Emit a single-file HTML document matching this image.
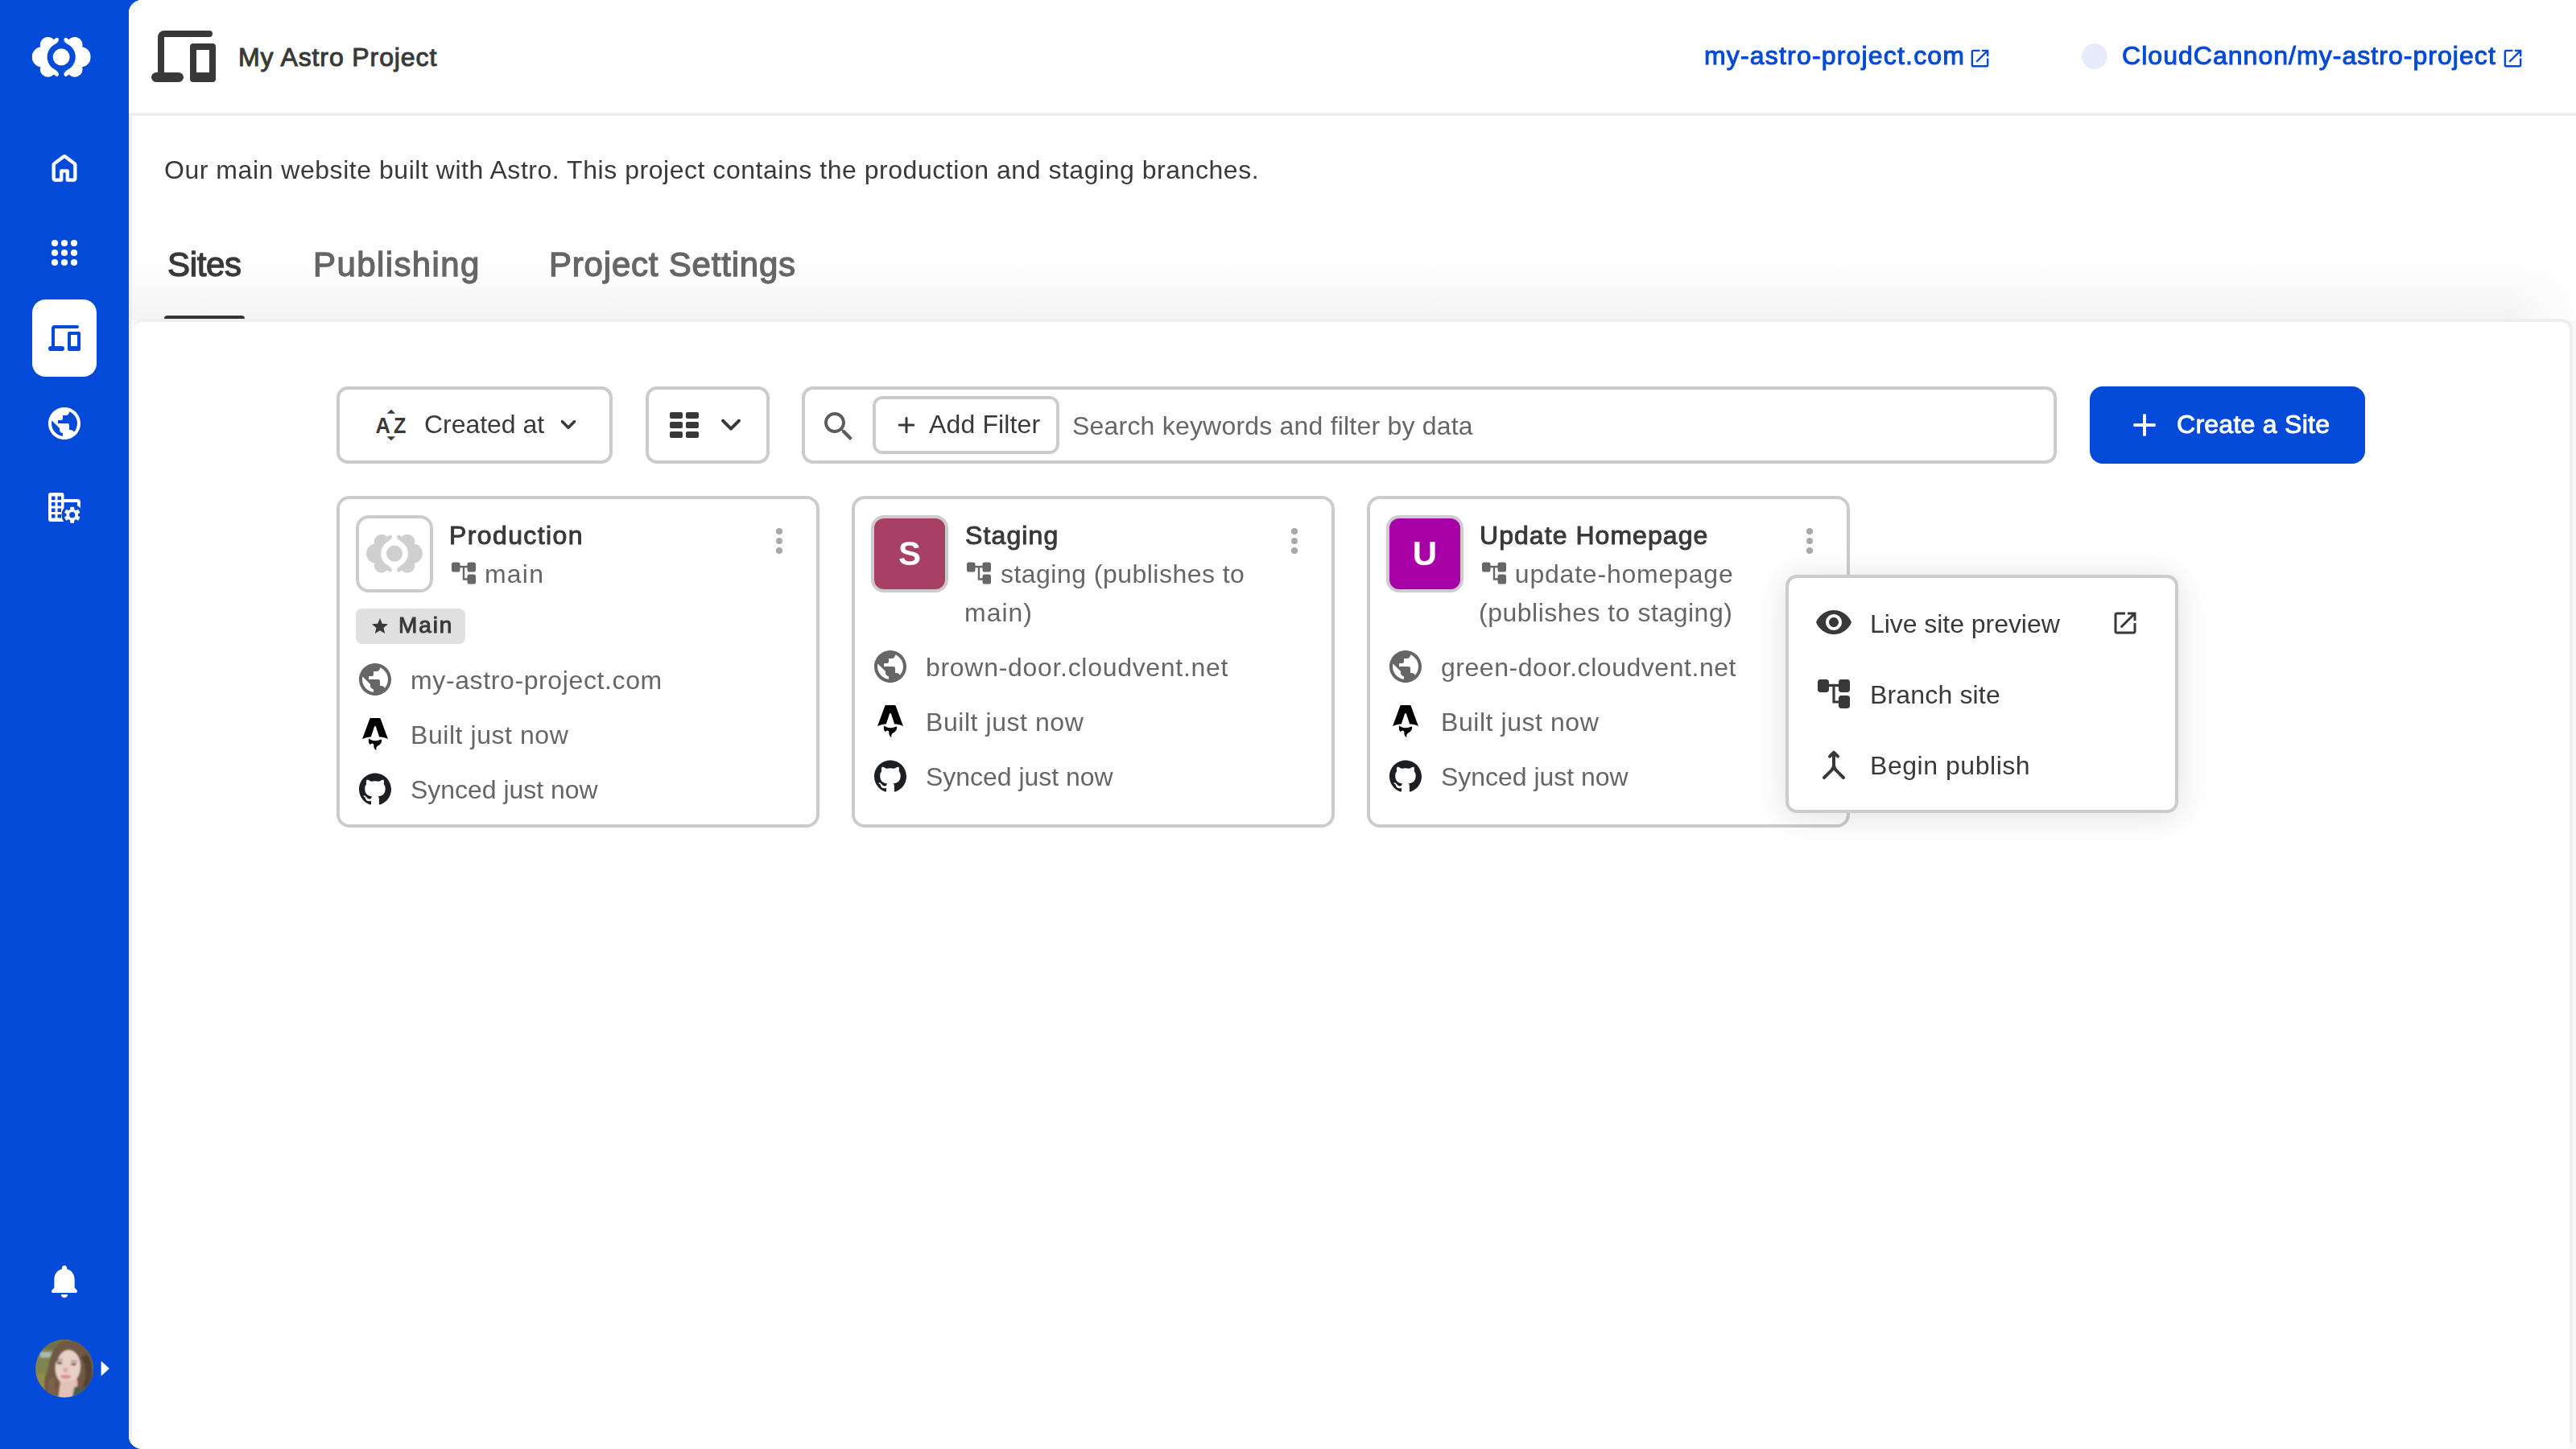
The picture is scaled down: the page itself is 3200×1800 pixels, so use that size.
<!DOCTYPE html>
<html lang="en">
<head>
<meta charset="utf-8">
<title>My Astro Project - Sites</title>
<style>
*{box-sizing:border-box;margin:0;padding:0}
html,body{width:3200px;height:1800px;overflow:hidden}
body{position:relative;background:#034ad8;font-family:"Liberation Sans",sans-serif;color:#393939;font-size:32px;line-height:1}
.abs{position:absolute}
.t{position:absolute;white-space:nowrap;line-height:1;will-change:transform}
#title{will-change:auto}
.b{font-weight:700}
.sb{font-weight:400;-webkit-text-stroke:1px currentColor}
svg{display:block;overflow:visible}
/* main panel */
#main{position:absolute;left:160px;top:0;width:3040px;height:1800px;background:#fff;border-radius:16px 0 0 16px;overflow:hidden}
#hdr{position:absolute;left:0;top:0;width:3040px;height:144px;border-bottom:4px solid #eee;background:#fff}
#lstrip{position:absolute;left:0;top:144px;width:4px;height:1656px;background:#eee}
#grad{position:absolute;left:4px;top:322px;width:3036px;height:76px;background:linear-gradient(to right,rgba(255,255,255,0) 2950px,rgba(255,255,255,.9) 3036px),linear-gradient(#fff,#f3f3f3)}
#rstrip{position:absolute;left:3032px;top:398px;width:8px;height:1402px;background:#f8f8f8}
#card{position:absolute;left:4px;top:396px;width:3032px;height:1396px;background:#fff;border-top:4px solid #eee;border-right:4px solid #eee;border-radius:14px 14px 0 0}
#tab1,#tab2,#tab3{-webkit-text-stroke-width:1.300px}
#tabline{position:absolute;left:44px;top:392px;width:100px;height:4px;background:#333;border-radius:4px 4px 0 0}
.sec{color:#666}
.link{color:#034ad8;-webkit-text-stroke:1px #034ad8}
.btn{position:absolute;border:4px solid #ccc;border-radius:14px;background:#fff}
.card{position:absolute;top:616px;width:600px;height:412px;border-radius:16px;box-shadow:inset 0 0 0 4px #ccc;background:#fff}
.thumb{position:absolute;left:24px;top:24px;width:96px;height:96px;border-radius:16px;border:4px solid #ccc;background:#fff}
.thumb .abs,.thumb .t{margin:-4px 0 0 -4px}
.lt{left:0;top:27.400px;width:96px;text-align:center;color:#fff;font-size:42px}
.mv{position:absolute;left:546px;top:40px;fill:#aaa}
.br{position:absolute;left:140px;top:78px;fill:#666;color:#666}
.ic{position:absolute;overflow:visible}
.ic.g{left:24px;width:48px;height:48px;fill:#666}
.ic.a{left:28px;width:40px;height:40px;fill:#000}
.ic.h{left:28px;width:40px;height:40px;fill:#1b1f23}
.rt{left:92px}
.wr{white-space:normal;width:420px;line-height:48px}
#menu{position:absolute;left:2218px;top:714px;width:488px;height:296px;border-radius:14px;background:#fff;box-shadow:inset 0 0 0 4px #ccc,0 4px 40px rgba(0,0,0,.13)}
</style>
</head>
<body>
<div id="main">
  <div id="hdr"></div>
  <div id="lstrip"></div>
  <div id="grad"></div>
  <div id="rstrip"></div>
  <div id="card"></div>
  <div id="tabline"></div>
</div>
<svg width="0" height="0" style="position:absolute">
<defs>
<symbol id="i-logo" viewBox="0 0 73 50">
  <g fill="var(--c1)">
    <circle cx="12.8" cy="24.9" r="12.8"/><circle cx="19.9" cy="9.8" r="9.8"/><circle cx="19.9" cy="40" r="9.8"/>
    <circle cx="60.2" cy="24.9" r="12.8"/><circle cx="53.1" cy="9.8" r="9.8"/><circle cx="53.1" cy="40" r="9.8"/>
    <circle cx="36.5" cy="24.9" r="22.4"/>
  </g>
  <g fill="var(--c2)">
    <circle cx="36.5" cy="24.9" r="17.6"/>
    <rect x="33.1" y="-1" width="6.8" height="52"/>
    <path d="M33.1 3V8A17.600 17.600 0 0 0 27.600 9.700Q33.100 6.500 33.100 3ZM39.900 3V8A17.600 17.600 0 0 1 45.400 9.700Q39.900 6.500 39.900 3ZM33.100 46.800V41.800A17.600 17.600 0 0 1 27.600 40.100Q33.100 43.300 33.100 46.800ZM39.900 46.800V41.800A17.600 17.600 0 0 0 45.400 40.100Q39.900 43.300 39.900 46.800Z"/>
  </g>
  <g fill="none" stroke="var(--c1)" stroke-width="4.2" stroke-linecap="round">
    <path d="M24 8 31 3M49 8 42 3M24 41.800 31 46.800M49 41.800 42 46.800"/>
  </g>
  <circle cx="36.5" cy="24.9" r="10.5" fill="var(--c1)"/>
</symbol>
<symbol id="i-home" viewBox="0 -960 960 960"><path d="M240-200h120v-200q0-17 11.500-28.500T400-440h160q17 0 28.500 11.500T600-400v200h120v-360L480-740 240-560v360Zm-80 0v-360q0-19 8.500-36t23.500-28l240-180q21-16 48-16t48 16l240 180q15 11 23.500 28t8.500 36v360q0 33-23.500 56.500T720-120H560q-17 0-28.500-11.500T520-160v-200h-80v200q0 17-11.500 28.500T400-120H240q-33 0-56.500-23.500T160-200Z"/></symbol>
<symbol id="i-devices" viewBox="0 0 24 24"><path fill-rule="evenodd" d="M6 4H20a1 1 0 0 1 0 2H6V17H10.500a1.500 1.500 0 0 1 0 3H3.500a1.500 1.500 0 0 1 0-3H4V6a2 2 0 0 1 2-2ZM15 8h6a1 1 0 0 1 1 1v10a1 1 0 0 1-1 1h-6a1 1 0 0 1-1-1V9a1 1 0 0 1 1-1Zm1 2v7h4v-7Z"/></symbol>
<symbol id="i-public" viewBox="0 0 24 24"><path d="M12 2C6.480 2 2 6.480 2 12s4.480 10 10 10 10-4.480 10-10S17.520 2 12 2zm-1 17.930c-3.950-.490-7-3.850-7-7.930 0-.620.080-1.210.210-1.790L9 15v1c0 1.100.900 2 2 2v1.930zm6.900-2.540c-.260-.810-1-1.390-1.900-1.390h-1v-3c0-.550-.450-1-1-1H8v-2h2c.550 0 1-.450 1-1V7h2c1.100 0 2-.900 2-2v-.410c2.930 1.190 5 4.060 5 7.410 0 2.080-.800 3.970-2.100 5.390z"/></symbol>
<symbol id="i-bell" viewBox="0 0 24 24"><path d="M12 22c1.100 0 2-.900 2-2h-4c0 1.100.890 2 2 2zm6-6v-5c0-3.070-1.640-5.640-4.500-6.320V4c0-.830-.670-1.500-1.500-1.500s-1.500.670-1.500 1.500v.680C7.630 5.360 6 7.920 6 11v5l-1.290 1.290c-.630.630-.190 1.710.700 1.710h13.170c.890 0 1.340-1.080.710-1.710L18 16z"/></symbol>
<symbol id="i-open" viewBox="0 0 24 24"><path d="M19 19H5V5h7V3H5c-1.110 0-2 .900-2 2v14c0 1.100.890 2 2 2h14c1.100 0 2-.900 2-2v-7h-2v7zM14 3v2h3.590l-9.830 9.830 1.410 1.410L19 6.410V10h2V3h-7z"/></symbol>
<symbol id="i-chev" viewBox="0 0 24 24"><path d="M7 9.800 12 14.800 17 9.800" fill="none" stroke="currentColor" stroke-width="2" stroke-linecap="round" stroke-linejoin="round"/></symbol>
<symbol id="i-search" viewBox="0 0 24 24"><path d="M15.500 14h-.790l-.280-.270C15.410 12.590 16 11.110 16 9.500 16 5.910 13.090 3 9.500 3S3 5.910 3 9.500 5.910 16 9.500 16c1.610 0 3.090-.590 4.230-1.570l.270.280v.790l5 4.990L20.490 19l-4.990-5zm-6 0C7.010 14 5 11.990 5 9.500S7.010 5 9.500 5 14 7.010 14 9.500 11.990 14 9.500 14z"/></symbol>
<symbol id="i-star" viewBox="0 0 24 24"><path d="M12 17.270L18.180 21l-1.640-7.030L22 9.240l-7.190-.610L12 2 9.190 8.630 2 9.240l5.460 4.730L5.820 21z"/></symbol>
<symbol id="i-eye" viewBox="0 0 24 24"><path d="M12 4.500C7 4.500 2.730 7.610 1 12c1.730 4.390 6 7.500 11 7.500s9.270-3.110 11-7.500c-1.730-4.390-6-7.500-11-7.500zM12 17c-2.760 0-5-2.240-5-5s2.240-5 5-5 5 2.240 5 5-2.240 5-5 5zm0-8c-1.660 0-3 1.340-3 3s1.340 3 3 3 3-1.340 3-3-1.340-3-3-3z"/></symbol>
<symbol id="i-branch" viewBox="0 0 24 24"><rect x="2" y="3" width="7" height="8" rx="1.700"/><rect x="15" y="3" width="7" height="8" rx="1.700"/><rect x="15" y="13" width="7" height="8" rx="1.700"/><path d="M8 6.700H16M12 6.700V17H16" fill="none" stroke="currentColor" stroke-width="1.600"/></symbol>
<symbol id="i-merge" viewBox="0 0 24 24"><path d="M6 20l4.600-4.600A4.800 4.800 0 0 0 12 12V4.500M18 20l-4.600-4.600A4.800 4.800 0 0 1 12 12M9.500 6.800 12 4.300 14.500 6.800" fill="none" stroke="currentColor" stroke-width="2" stroke-linecap="round" stroke-linejoin="round"/></symbol>
<symbol id="i-astro" viewBox="0 0 24 24"><path d="M8.358 20.162c-1.186-1.070-1.532-3.316-1.038-4.944.856 1.026 2.043 1.352 3.272 1.535 1.897.283 3.760.177 5.522-.678.202-.098.388-.229.608-.360.166.473.209.950.151 1.437-.140 1.185-.738 2.100-1.688 2.794-.380.277-.782.525-1.175.787-1.205.804-1.531 1.747-1.078 3.119l.044.148a3.158 3.158 0 0 1-1.407-1.188 3.310 3.310 0 0 1-.544-1.815c-.004-.320-.004-.642-.048-.958-.106-.769-.472-1.113-1.161-1.133-.707-.020-1.267.411-1.415 1.090-.012.053-.028.104-.045.165h.002zm-5.961-4.445s3.240-1.575 6.490-1.575l2.451-7.565c.092-.366.360-.614.662-.614.302 0 .570.248.662.614l2.450 7.565c3.850 0 6.491 1.575 6.491 1.575L16.088.727C15.930.285 15.663 0 15.303 0H8.697c-.360 0-.615.285-.784.727l-5.516 14.990z"/></symbol>
<symbol id="i-github" viewBox="0 0 24 24"><path d="M12 .297c-6.630 0-12 5.373-12 12 0 5.303 3.438 9.800 8.205 11.385.600.113.820-.258.820-.577 0-.285-.010-1.040-.015-2.040-3.338.724-4.042-1.610-4.042-1.610C4.422 18.070 3.633 17.700 3.633 17.700c-1.087-.744.084-.729.084-.729 1.205.084 1.838 1.236 1.838 1.236 1.070 1.835 2.809 1.305 3.495.998.108-.776.417-1.305.760-1.605-2.665-.300-5.466-1.332-5.466-5.930 0-1.310.465-2.380 1.235-3.220-.135-.303-.540-1.523.105-3.176 0 0 1.005-.322 3.300 1.230.960-.267 1.980-.399 3-.405 1.020.006 2.040.138 3 .405 2.280-1.552 3.285-1.230 3.285-1.230.645 1.653.240 2.873.120 3.176.765.840 1.230 1.910 1.230 3.220 0 4.610-2.805 5.625-5.475 5.920.420.360.810 1.096.810 2.220 0 1.606-.015 2.896-.015 3.286 0 .315.210.690.825.570C20.565 22.092 24 17.592 24 12.297c0-6.627-5.373-12-12-12"/></symbol>
</defs>
</svg>
<!-- sidebar -->
<svg class="abs" style="left:0;top:0" width="160" height="1800" viewBox="0 0 160 1800" fill="#fff">
  <use href="#i-logo" x="39.700" y="45.900" width="73" height="50" style="--c1:#fff;--c2:#034ad8"/>
  <g transform="translate(80 208.500) scale(0.950) translate(-80 -208.500)"><use href="#i-home" x="56" y="184.500" width="48" height="48" stroke="#fff" stroke-width="12"/></g>
  <g><circle cx="68" cy="302" r="4.100"/><circle cx="80" cy="302" r="4.100"/><circle cx="92" cy="302" r="4.100"/><circle cx="68" cy="314" r="4.100"/><circle cx="80" cy="314" r="4.100"/><circle cx="92" cy="314" r="4.100"/><circle cx="68" cy="326" r="4.100"/><circle cx="80" cy="326" r="4.100"/><circle cx="92" cy="326" r="4.100"/></g>
  <rect x="40" y="372" width="80" height="96" rx="16.500"/>
  <use href="#i-devices" x="56" y="396" width="48" height="48" fill="#034ad8"/>
  <use href="#i-public" x="56" y="502" width="48" height="48"/>
  <!-- org settings -->
  <g>
    <path fill-rule="evenodd" d="M63 612H76.500a3 3 0 0 1 3 3V620H96a4 4 0 0 1 4 4V634H96V624H79.500V648H63a3 3 0 0 1-3-3V615a3 3 0 0 1 3-3ZM64 616.500h4.500v4.500H64ZM71.500 616.500H76v4.500h-4.500ZM64 624h4.500v4.500H64ZM71.500 624H76v4.500h-4.500ZM64 631.500h4.500v4.500H64ZM71.500 631.500H76v4.500h-4.500ZM64 639h4.500v4.500H64ZM71.500 639H76v4.500h-4.500Z"/>
    <circle cx="89.700" cy="639.700" r="13.200" fill="#034ad8"/>
    <g transform="translate(89.700 639.700)">
      <circle r="7.200"/>
      <g><rect x="-2.500" y="-10" width="5" height="20" rx="1"/><rect x="-2.500" y="-10" width="5" height="20" rx="1" transform="rotate(60)"/><rect x="-2.500" y="-10" width="5" height="20" rx="1" transform="rotate(120)"/></g>
      <circle r="3.600" fill="#034ad8"/>
    </g>
  </g>
  <g transform="translate(80 1572) scale(1.055 1.03) translate(-80 -1572)"><use href="#i-bell" x="56" y="1567" width="48" height="48"/></g>
  <!-- avatar -->
  <defs>
    <clipPath id="avc"><circle cx="80" cy="1700" r="36"/></clipPath>
    <filter id="avb" x="-20%" y="-20%" width="140%" height="140%"><feGaussianBlur stdDeviation="1.200"/></filter>
  </defs>
  <g clip-path="url(#avc)">
    <rect x="40" y="1660" width="80" height="80" fill="#80824f"/>
    <g filter="url(#avb)">
      <rect x="40" y="1658" width="52" height="18" fill="#6f6f46"/>
      <rect x="50" y="1679.500" width="17" height="7" fill="#a9bdb0"/>
      <rect x="40" y="1706" width="22" height="34" fill="#938c47"/>
      <path d="M61 1694c2-18 12-29 27-29 17 0 27 14 28 34 1 14-4 24-10 30l-8 8-38 4c-6-10-7-26-1-38z" fill="#705945"/>
      <path d="M100 1686c7 8 9 26 1 40l9-4c7-12 6-30-2-40z" fill="#574332"/>
      <path d="M62 1712c-4 8-4 18 0 28h14c-6-8-10-18-8-30z" fill="#7d6049"/>
      <ellipse cx="84.300" cy="1698.500" rx="15.600" ry="21.500" fill="#e9d0c6" transform="rotate(5 84.300 1698.500)"/>
      <path d="M75 1716l21-2 1 26H72z" fill="#e2c2b6"/>
      <path d="M92.500 1723l5-1 7 9-6 10h-10z" fill="#4f5a55"/>
      <path d="M67 1690c2-8 8-13 16-14-6 3-10 8-12 16z" fill="#705945"/>
      <ellipse cx="74" cy="1693.200" rx="3.400" ry="1.400" fill="#4a3a36"/><ellipse cx="91.500" cy="1694.800" rx="3.400" ry="1.400" fill="#4a3a36"/>
      <path d="M70 1689.500l8-.500M88 1690.500l8 1" stroke="#6b4c3e" stroke-width="1.200"/>
      <ellipse cx="81.300" cy="1702" rx="3.200" ry="3" fill="#dcab9e"/>
      <ellipse cx="81.500" cy="1710.200" rx="6.600" ry="2.500" fill="#d98a94"/>
    </g>
  </g>
  <path d="M126.600 1691.500 135.200 1699.300a1 1 0 0 1 0 1.400L126.600 1708.500a.600.600 0 0 1-1-.500v-16a.600.600 0 0 1 1-.500z"/>
</svg>
<!--SIDEBAR-END-->
<!-- header -->
<svg class="abs" style="left:180px;top:22px;color:#393939" width="96" height="96" fill="#393939"><use href="#i-devices" width="96" height="96"/></svg>
<div class="t sb" id="title" style="left:296.00px;top:55.400px;font-size:32px;letter-spacing:0.890px">My Astro Project</div>
<div class="t link" id="lnk1" style="left:2116.50px;top:52.900px;font-size:32px;letter-spacing:1.182px">my-astro-project.com</div>
<svg class="abs" style="left:2444.500px;top:57.800px" width="29" height="29" fill="#034ad8"><use href="#i-open" width="29" height="29"/></svg>
<div class="abs" style="left:2586px;top:54px;width:32px;height:32px;border-radius:50%;background:#e6ecfb"></div>
<div class="t link" id="lnk2" style="left:2635.80px;top:52.900px;font-size:32px;letter-spacing:1.038px">CloudCannon/my-astro-project</div>
<svg class="abs" style="left:3106.500px;top:57.800px" width="29" height="29" fill="#034ad8"><use href="#i-open" width="29" height="29"/></svg>
<div class="t" id="desc" style="left:204px;top:195px;font-size:32px;letter-spacing:0.535px">Our main website built with Astro. This project contains the production and staging branches.</div>
<div class="t sb" id="tab1" style="left:208.00px;top:308px;font-size:42px;letter-spacing:-0.350px">Sites</div>
<div class="t sb sec" id="tab2" style="left:388.60px;top:308px;font-size:42px;letter-spacing:1.400px">Publishing</div>
<div class="t sb sec" id="tab3" style="left:682.00px;top:308px;font-size:42px;letter-spacing:0.797px">Project Settings</div>
<!--HEADER-END-->
<!-- toolbar -->
<div class="btn" style="left:418px;top:480px;width:343px;height:96px"></div>
<svg class="abs" style="left:460px;top:504px" width="48" height="48" fill="#393939">
  <path d="M25.900 4.700 31.200 9.700H20.600ZM25.900 43.300 31.200 38.300H20.600Z"/>
  <text x="6.600" y="33.800" font-family="Liberation Sans, sans-serif" font-weight="700" font-size="27" textLength="18.400" lengthAdjust="spacingAndGlyphs">A</text>
  <text x="28.900" y="33.800" font-family="Liberation Sans, sans-serif" font-weight="700" font-size="27" textLength="15.400" lengthAdjust="spacingAndGlyphs">Z</text>
</svg>
<div class="t" id="sortt" style="left:526.800px;top:510.700px;letter-spacing:-0.04px">Created at</div>
<svg class="abs" style="left:688px;top:508.800px;color:#393939" width="36" height="36" viewBox="0 0 24 24"><path d="M7 9.800 12 14.800 17 9.800" fill="none" stroke="currentColor" stroke-width="2.400" stroke-linecap="round" stroke-linejoin="round"/></svg>
<div class="btn" style="left:802px;top:480px;width:154px;height:96px"></div>
<svg class="abs" style="left:832px;top:512px" width="36" height="32" fill="#393939"><rect x="0" y="0" width="16" height="8" rx="2"/><rect x="20" y="0" width="16" height="8" rx="2"/><rect x="0" y="12" width="16" height="8" rx="2"/><rect x="20" y="12" width="16" height="8" rx="2"/><rect x="0" y="24" width="16" height="8" rx="2"/><rect x="20" y="24" width="16" height="8" rx="2"/></svg>
<svg class="abs" style="left:884px;top:503px;color:#393939" width="48" height="48"><use href="#i-chev" width="48" height="48"/></svg>
<div class="btn" style="left:996px;top:480px;width:1559px;height:96px"></div>
<svg class="abs" style="left:1018.300px;top:506.400px" width="48" height="48" fill="#5c5c5c"><use href="#i-search" width="48" height="48"/></svg>
<div class="btn" style="left:1084px;top:492px;width:232px;height:72px;border-radius:12px"></div>
<svg class="abs" style="left:1113.800px;top:515.700px" width="24" height="24"><path d="M12 3.200V20.800M3.200 12H20.800" stroke="#393939" stroke-width="3" stroke-linecap="round" fill="none"/></svg>
<div class="t" id="addf" style="left:1153.500px;top:510.700px;letter-spacing:0.14px">Add Filter</div>
<div class="t sec" id="ph" style="left:1331.50px;top:512.900px;letter-spacing:0.201px">Search keywords and filter by data</div>
<div class="abs" style="left:2596px;top:480px;width:342px;height:96px;border-radius:16px;background:#034ad8"></div>
<svg class="abs" style="left:2648px;top:511.600px" width="32" height="32"><path d="M16 4V28M4 16H28" stroke="#fff" stroke-width="4" stroke-linecap="round" fill="none"/></svg>
<div class="t sb" id="create" style="left:2703.50px;top:510.800px;color:#fff;letter-spacing:0.270px">Create a Site</div>
<!--TOOLBAR-END-->
<!-- cards -->
<div class="card" style="left:418px">
  <div class="thumb"><svg class="abs" style="left:13px;top:23.300px" width="70" height="49.400"><use href="#i-logo" width="70" height="49.400" style="--c1:#cfcfcf;--c2:#fff"/></svg></div>
  <div class="t sb" id="c1n" style="left:140.30px;top:32.600px;letter-spacing:1.394px">Production</div>
  <svg class="mv" width="8" height="32"><circle cx="4" cy="4" r="4"/><circle cx="4" cy="16" r="4"/><circle cx="4" cy="28" r="4"/></svg>
  <svg class="br" width="36" height="36"><use href="#i-branch" width="36" height="36"/></svg>
  <div class="t sec" id="c1b" style="left:183.800px;top:80.700px;letter-spacing:1.2px">main</div>
  <div class="abs" style="left:24px;top:140px;width:136px;height:44px;border-radius:8px;background:#e0e0e0"></div>
  <svg class="abs" style="left:41.800px;top:150px" width="24" height="24" fill="#393939"><use href="#i-star" width="24" height="24"/></svg>
  <div class="t sb" id="c1m" style="left:77.00px;top:146.800px;font-size:28px;letter-spacing:1.900px">Main</div>
  <svg class="ic g" style="top:204px"><use href="#i-public" width="48" height="48"/></svg>
  <div class="t sec rt" id="c1r1" style="left:92.00px;top:213px;letter-spacing:0.618px">my-astro-project.com</div>
  <svg class="ic a" style="top:276px"><use href="#i-astro" width="40" height="40"/></svg>
  <div class="t sec rt" id="c1r2" style="left:92px;top:281px;letter-spacing:0.56px">Built just now</div>
  <svg class="ic h" style="top:344px"><use href="#i-github" width="40" height="40"/></svg>
  <div class="t sec rt" id="c1r3" style="left:92px;top:349px;letter-spacing:-0.03px">Synced just now</div>
</div>
<div class="card" style="left:1058px">
  <div class="thumb" style="background:#a84066"><div class="t b lt">S</div></div>
  <div class="t sb" id="c2n" style="left:140.50px;top:32.600px;letter-spacing:1.117px">Staging</div>
  <svg class="mv" width="8" height="32"><circle cx="4" cy="4" r="4"/><circle cx="4" cy="16" r="4"/><circle cx="4" cy="28" r="4"/></svg>
  <svg class="br" width="36" height="36"><use href="#i-branch" width="36" height="36"/></svg>
  <div class="t sec wr" id="c2b" style="left:139.500px;top:72.700px;text-indent:45px;letter-spacing:0.47px">staging (publishes to <span style="letter-spacing:1px">main)</span></div>
  <svg class="ic g" style="top:188px"><use href="#i-public" width="48" height="48"/></svg>
  <div class="t sec rt" id="c2r1" style="left:92.00px;top:197px;letter-spacing:0.697px">brown-door.cloudvent.net</div>
  <svg class="ic a" style="top:260px"><use href="#i-astro" width="40" height="40"/></svg>
  <div class="t sec rt" style="left:92px;top:265px;letter-spacing:0.56px">Built just now</div>
  <svg class="ic h" style="top:328px"><use href="#i-github" width="40" height="40"/></svg>
  <div class="t sec rt" style="left:92px;top:333px;letter-spacing:-0.03px">Synced just now</div>
</div>
<div class="card" style="left:1698px">
  <div class="thumb" style="background:#a700a7"><div class="t b lt">U</div></div>
  <div class="t sb" id="c3n" style="left:139.50px;top:32.600px;letter-spacing:1.047px">Update Homepage</div>
  <svg class="mv" width="8" height="32"><circle cx="4" cy="4" r="4"/><circle cx="4" cy="16" r="4"/><circle cx="4" cy="28" r="4"/></svg>
  <svg class="br" width="36" height="36"><use href="#i-branch" width="36" height="36"/></svg>
  <div class="t sec wr" id="c3b" style="left:139px;top:72.700px;text-indent:44.800px;letter-spacing:0.8px">update-homepage <span style="letter-spacing:0.51px">(publishes to staging)</span></div>
  <svg class="ic g" style="top:188px"><use href="#i-public" width="48" height="48"/></svg>
  <div class="t sec rt" id="c3r1" style="left:92px;top:197px;letter-spacing:0.54px">green-door.cloudvent.net</div>
  <svg class="ic a" style="top:260px"><use href="#i-astro" width="40" height="40"/></svg>
  <div class="t sec rt" style="left:92px;top:265px;letter-spacing:0.56px">Built just now</div>
  <svg class="ic h" style="top:328px"><use href="#i-github" width="40" height="40"/></svg>
  <div class="t sec rt" style="left:92px;top:333px;letter-spacing:-0.03px">Synced just now</div>
</div>
<!--CARDS-END-->
<!-- menu -->
<div id="menu"></div>
<svg class="abs" style="left:2254px;top:749px" width="48" height="48" fill="#393939"><use href="#i-eye" width="48" height="48"/></svg>
<div class="t" id="m1" style="left:2322.500px;top:758.500px;letter-spacing:-0.05px">Live site preview</div>
<svg class="abs" style="left:2622px;top:755.500px" width="36" height="36" fill="#393939"><use href="#i-open" width="36" height="36"/></svg>
<svg class="abs" style="left:2254px;top:838px;color:#393939" width="48" height="48" fill="#393939"><use href="#i-branch" width="48" height="48"/></svg>
<div class="t" id="m2" style="left:2322.500px;top:846.700px;letter-spacing:0.16px">Branch site</div>
<svg class="abs" style="left:2254px;top:926px;color:#393939" width="48" height="48"><use href="#i-merge" width="48" height="48"/></svg>
<div class="t" id="m3" style="left:2322.500px;top:934.900px;letter-spacing:0.54px">Begin publish</div>
<!--MENU-END-->
</body>
</html>
